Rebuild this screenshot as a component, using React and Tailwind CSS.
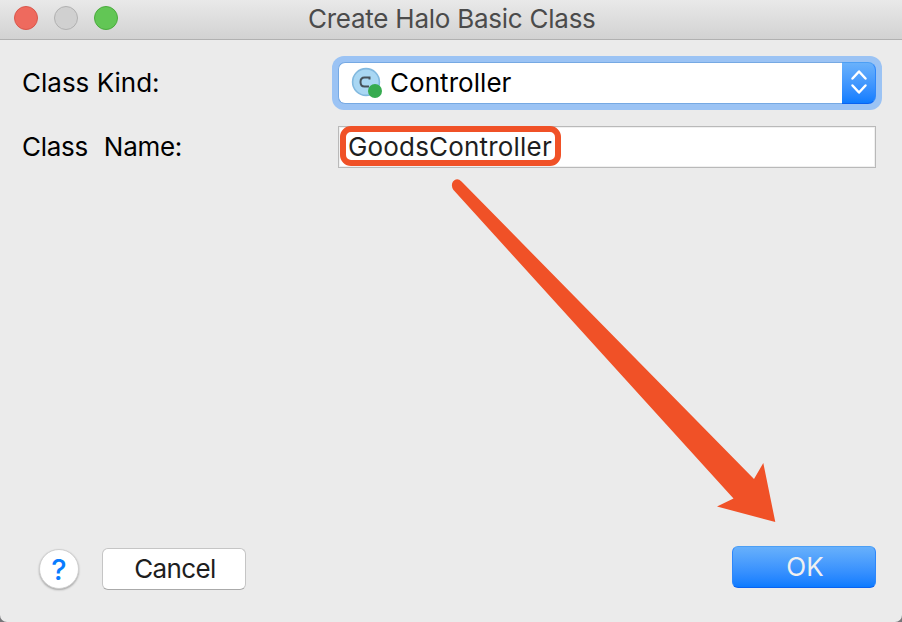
import React from "react";

function TrafficLights() {
  return (
    <div className="flex gap-4">
      <span className="size-6 rounded-full border border-[#d9574c] bg-[#ee6a5e]" />
      <span className="size-6 rounded-full border border-[#b1b1b1] bg-[#d0d0d0]" />
      <span className="size-6 rounded-full border border-[#4aab3d] bg-[#62c655]" />
    </div>
  );
}

function ClassIcon() {
  return (
    <svg width="32" height="32" viewBox="0 0 32 32">
      <circle cx="15" cy="15" r="13.4" fill="#a9d7f3" stroke="#82b9df" strokeWidth="1.6" />
      <path d="M18.500 12.500V10.500H13.500Q9.500 10.500 9.500 15T13.500 19.500H18" fill="none" stroke="#46525b" strokeWidth="2" />
      <circle cx="24" cy="24" r="7" fill="#36ab50" />
    </svg>
  );
}

function Stepper() {
  return (
    <div className="flex h-[42px] w-[34px] items-start justify-center rounded-r-[8px] border-t border-r border-b border-t-[#4c9ff5] border-r-[#2d87fb] border-b-[#0a62f0] bg-linear-to-b from-[#69b1fb] to-[#0c7cff] pt-[6px]">
      <svg width="18" height="26" viewBox="0 0 18 26" fill="none" stroke="white" strokeWidth="2.5" strokeLinecap="round" strokeLinejoin="round">
        <path d="M2.500 9.500 9 2.500l6.500 7M2.500 16.500 9 23.500l6.500-7" />
      </svg>
    </div>
  );
}

export default function App() {
  return (
    <div className="h-[622px] w-[902px] overflow-hidden bg-[#77777a] font-['Inter','Liberation_Sans',sans-serif] text-[26px] leading-8 font-normal text-black">
      <div className="relative flex h-full flex-col rounded-b-[7px] bg-[#ebebeb]">
        <header className="grid h-10 shrink-0 grid-cols-[308px_1fr] border-b border-[#b1b1b1] bg-linear-to-b from-[#e9e9e9] to-[#d2d2d2]">
          <div className="pt-[6px] pl-[14px]">
            <TrafficLights />
          </div>
          <h1 className="pt-[3px] tracking-[-0.25px] whitespace-nowrap text-[#4b4b4b]">Create Halo Basic Class</h1>
        </header>

        <main className="flex flex-1 flex-col pt-4 pr-5 pl-[22px]">
          <div className="flex h-[54px] items-start justify-between">
            <label className="pt-[11px] whitespace-pre">Class Kind:</label>
            <div className="h-[54px] w-[550px] rounded-[12px] bg-[#9bc3f4] p-[6px]">
              <div className="flex h-[42px]">
                <div className="flex flex-1 rounded-l-[7px] border border-r-0 border-[#76a9e3] bg-white pl-[12px]">
                  <div className="pt-[4px]">
                    <ClassIcon />
                  </div>
                  <span className="pt-[4px] pl-[7px] tracking-[0.05px]">Controller</span>
                </div>
                <Stepper />
              </div>
            </div>
          </div>

          <div className="mt-4 flex h-[42px] justify-between pr-[6px]">
            <label className="pt-[5px] tracking-[-0.3px] [word-spacing:1px] whitespace-pre">Class  Name:</label>
            <div className="h-[42px] w-[538px] border border-[#b9b9b9] bg-white p-px shadow-[inset_0_0_0_1px_#f0f0f0]">
              <div className="-mt-[2px] h-[40px] w-[221px] rounded-[11px] border-[6px] border-[#f05127] text-[#1e1e1e]">
                <span className="-mt-px block pl-[2px] tracking-[0.18px] whitespace-nowrap">GoodsController</span>
              </div>
            </div>
          </div>
        </main>

        <footer className="flex h-[76px] shrink-0 items-start pr-[26px] pl-[39px]">
          <button className="mt-[3px] flex size-10 items-center justify-center rounded-full border border-[#d0d0d0] bg-white pt-px text-[29px] font-medium text-[#087cff] shadow-[0_1px_2px_#0000004d]">
            ?
          </button>
          <button className="mt-[2px] ml-[23px] h-[42px] w-36 rounded-[6px] border border-[#c5c5c5] border-b-[#aaaaaa] bg-white pl-[2px] tracking-[-0.6px] text-[#1e1e1e]">
            Cancel
          </button>
          <button className="ml-auto h-[42px] w-36 rounded-[6px] border border-[#2d87fb] border-t-[#4c9ff5] border-b-[#0a62f0] bg-linear-to-b from-[#67b0fb] to-[#0a7bff] pl-[2px] text-[#f0f0f0]">
            OK
          </button>
        </footer>

        <svg className="pointer-events-none absolute top-0 left-0" width="902" height="622">
          <path d="M453.500 190 733.500 498.500 717 506.500 775.300 522 763.300 463 754 479 461.500 181.500Q457 177 453 181.500 450.500 185.500 453.500 190Z" fill="#f05127" />
        </svg>
      </div>
    </div>
  );
}
